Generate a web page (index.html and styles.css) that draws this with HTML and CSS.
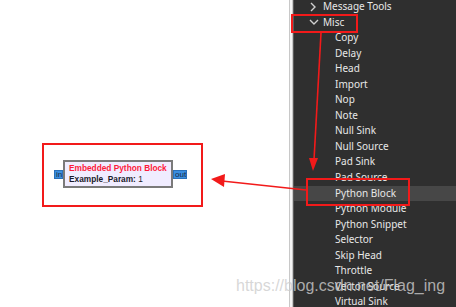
FILE: index.html
```html
<!DOCTYPE html>
<html lang="en">
<head>
    <meta charset="UTF-8">
    <title>GNU Radio - Misc blocks</title>
    <link rel="stylesheet" href="styles.css">
</head>
<body>
    <div class="window">
        <div class="canvas">
            <div class="block-frame">
                <div class="block">
                    <span class="port port-in">in</span>
                    <div class="block-body">
                        <div class="block-title">Embedded Python Block</div>
                        <div class="block-param"><b>Example_Param:</b> 1</div>
                    </div>
                    <span class="port port-out">out</span>
                </div>
            </div>
        </div>
        <div class="divider"></div>
        <div class="library">
            <div class="row category">
                <svg class="chev" width="14" height="10" viewBox="0 0 14 10"><path d="M2 1 L6 5 L2 9" fill="none" stroke="#cfcfcf" stroke-width="1.4"/></svg>
                Message Tools
            </div>
            <div class="row category open">
                <svg class="chev" width="14" height="8" viewBox="0 0 14 8"><path d="M1 2 L5 6 L9 2" fill="none" stroke="#cfcfcf" stroke-width="1.4"/></svg>
                Misc
            </div>
            <div class="row item">Copy</div>
            <div class="row item">Delay</div>
            <div class="row item">Head</div>
            <div class="row item">Import</div>
            <div class="row item">Nop</div>
            <div class="row item">Note</div>
            <div class="row item">Null Sink</div>
            <div class="row item">Null Source</div>
            <div class="row item">Pad Sink</div>
            <div class="row item">Pad Source</div>
            <div class="row item selected">Python Block</div>
            <div class="row item">Python Module</div>
            <div class="row item">Python Snippet</div>
            <div class="row item">Selector</div>
            <div class="row item">Skip Head</div>
            <div class="row item">Throttle</div>
            <div class="row item">Vector Source</div>
            <div class="row item">Virtual Sink</div>
        </div>

        <!-- annotations drawn over the screenshot -->
        <div class="mark mark-misc"></div>
        <div class="mark mark-python"></div>
        <svg class="arrows" width="456" height="307" viewBox="0 0 456 307">
            <line x1="321" y1="33" x2="314" y2="160" stroke="#f21a1a" stroke-width="1.6"/>
            <polygon points="309,158 318,158 313,171" fill="#f21a1a"/>
            <line x1="306" y1="190" x2="222" y2="181" stroke="#f21a1a" stroke-width="1.6"/>
            <polygon points="211,179 225,174 224,187" fill="#f21a1a"/>
        </svg>
        <div class="watermark">https://blog.csdn.net/Flag_ing</div>
    </div>
</body>
</html>
```

FILE: styles.css
```css
body {
    margin: 0;
    background: #ffffff;
    font-family: "Liberation Sans", Arial, sans-serif;
}

.window {
    position: relative;
    display: flex;
    width: 456px;
    height: 307px;
    overflow: hidden;
}

.canvas {
    width: 289px;
    flex: none;
    background: #ffffff;
    padding: 143px 0 0 42px;
    box-sizing: border-box;
}

.block-frame {
    width: 161px;
    height: 64px;
    box-sizing: border-box;
    border: 2px solid #f21a1a;
    padding: 15px 0 0 10px;
}

.block {
    display: flex;
    align-items: center;
}

.port {
    background: #3a8ee0;
    border: 1px solid #2a70b8;
    color: #1a2a40;
    font-size: 8px;
    line-height: 7px;
    height: 7px;
    padding: 0 1px;
    overflow: hidden;
}

.port-in {
    width: 5px;
}

.port-out {
    width: 10px;
}

.block-body {
    width: 102px;
    height: 23px;
    background: #f0ecff;
    border: 2px solid #7a7a7a;
    padding: 1px 0 0 4px;
}

.block-title {
    color: #ff1a3a;
    font-weight: bold;
    font-size: 8.3px;
    line-height: 11px;
}

.block-param {
    color: #1a1a2a;
    font-size: 8.3px;
    line-height: 11px;
}

.divider {
    width: 2px;
    flex: none;
    border-left: 1px solid #c8c8c8;
    border-right: 1px solid #c8c8c8;
    background: #f4f4f4;
}

.library {
    flex: 1;
    background: #2f2f2f;
    border-left: 1px solid #5a5a5a;
    margin-top: -1px;
    font-family: "Noto Sans", "Open Sans", sans-serif;
    font-size: 10px;
    color: #e8e8e8;
}

.row {
    height: 15.55px;
    line-height: 15.55px;
    white-space: nowrap;
}

.category {
    display: flex;
    align-items: center;
    padding-left: 15px;
}

.category .chev {
    flex: none;
}

.item {
    padding-left: 41px;
}

.item.selected {
    background: #474747;
}

.mark {
    position: absolute;
    border: 2px solid #f21a1a;
    box-sizing: border-box;
}

.mark-misc {
    left: 291px;
    top: 14px;
    width: 67px;
    height: 19px;
}

.mark-python {
    left: 306px;
    top: 178px;
    width: 104px;
    height: 28px;
}

.arrows {
    position: absolute;
    left: 0;
    top: 0;
}

.watermark {
    position: absolute;
    left: 236px;
    top: 277px;
    font-family: "Liberation Sans", Arial, sans-serif;
    font-size: 16px;
    color: rgba(205, 205, 205, 0.8);
}
```
